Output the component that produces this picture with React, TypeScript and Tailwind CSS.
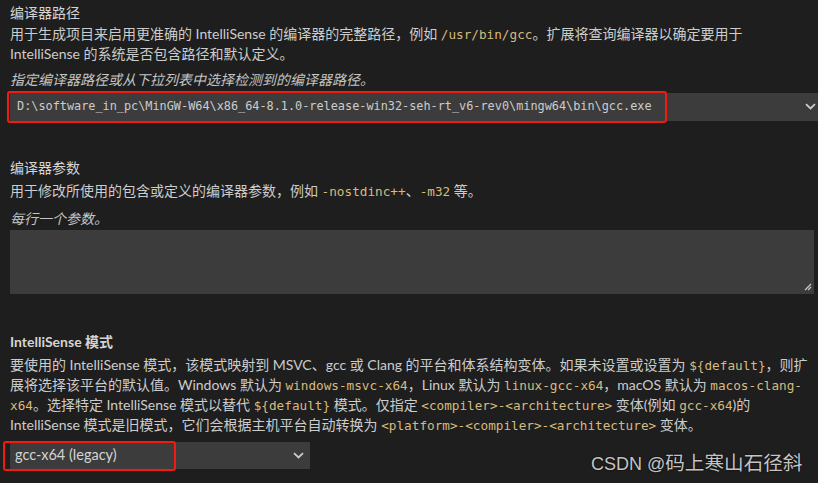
import React from "react";

function Code({ children }: { children: React.ReactNode }) {
  return (
    <span className="font-['DejaVu_Sans_Mono',monospace] text-[12.7px] text-[#d7ba7d]">{children}</span>
  );
}

function Chevron() {
  return (
    <svg width="11" height="7" viewBox="0 0 11 7" className="shrink-0">
      <path d="M1 1.2 L5.5 5.5 L10 1.2" fill="none" stroke="#cccccc" strokeWidth="1.8" />
    </svg>
  );
}

function RedMark({ className }: { className: string }) {
  return <div className={"pointer-events-none absolute rounded-[3px] border-2 border-[#f21b12] " + className} />;
}

export default function App() {
  return (
    <div className="relative h-[483px] w-[818px] overflow-hidden bg-[#1e1e1e] pl-[10px] pt-[3px] font-['Lato','Noto_Sans_CJK_SC',sans-serif] text-[14px] leading-[20px] text-[#cccccc]">
      {/* 编译器路径 */}
      <div className="h-[20px] text-[#d4d4d4]">编译器路径</div>
      <div className="mt-[1px] whitespace-nowrap">
        <div className="h-[20px]">
          用于生成项目来启用更准确的 IntelliSense 的编译器的完整路径，例如 <Code>/usr/bin/gcc</Code>。扩展将查询编译器以确定要用于
        </div>
        <div className="h-[20px]">IntelliSense 的系统是否包含路径和默认定义。</div>
      </div>
      <div className="mt-[6px] h-[20px] italic text-[#c4c4c4]">指定编译器路径或从下拉列表中选择检测到的编译器路径。</div>
      <div className="relative mt-[3px]">
        <div className="flex h-[28px] items-center justify-between bg-[#3c3c3c] pb-[2px] pl-[7px] pr-[2px]">
          <span className="whitespace-nowrap font-['DejaVu_Sans_Mono',monospace] text-[11.85px] text-[#cccccc]">
            D:\software_in_pc\MinGW-W64\x86_64-8.1.0-release-win32-seh-rt_v6-rev0\mingw64\bin\gcc.exe
          </span>
          <Chevron />
        </div>
        <RedMark className="-left-[3px] -top-[2px] h-[32px] w-[660px]" />
      </div>

      {/* 编译器参数 */}
      <div className="mt-[37px] h-[20px] text-[#d4d4d4]">编译器参数</div>
      <div className="mt-[3px] h-[20px] whitespace-nowrap">
        用于修改所使用的包含或定义的编译器参数，例如 <Code>-nostdinc++</Code>、<Code>-m32</Code> 等。
      </div>
      <div className="mt-[8px] h-[20px] italic text-[#c4c4c4]">每行一个参数。</div>
      <div className="relative mt-[1px] h-[64px] w-[804px] bg-[#3c3c3c]">
        <svg width="8" height="8" viewBox="0 0 8 8" className="absolute bottom-[3px] right-[2px]">
          <path d="M7 1 L1 7 M7 4 L4 7" stroke="#c8c8c8" strokeWidth="1.2" />
        </svg>
      </div>

      {/* IntelliSense 模式 */}
      <div className="mt-[38px] h-[20px] font-bold text-[#d4d4d4]">IntelliSense 模式</div>
      <div className="mt-[3px] whitespace-nowrap">
        <div className="h-[20px]">
          要使用的 IntelliSense 模式，该模式映射到 MSVC、gcc 或 Clang 的平台和体系结构变体。如果未设置或设置为 <Code>{"${default}"}</Code>，则扩
        </div>
        <div className="h-[20px]">
          展将选择该平台的默认值。Windows 默认为 <Code>windows-msvc-x64</Code>，Linux 默认为 <Code>linux-gcc-x64</Code>，macOS 默认为 <Code>macos-clang-</Code>
        </div>
        <div className="h-[20px]">
          <Code>x64</Code>。选择特定 IntelliSense 模式以替代 <Code>{"${default}"}</Code> 模式。仅指定 <Code>{"<compiler>-<architecture>"}</Code> 变体(例如 <Code>gcc-x64</Code>)的
        </div>
        <div className="h-[20px]">
          IntelliSense 模式是旧模式，它们会根据主机平台自动转换为 <Code>{"<platform>-<compiler>-<architecture>"}</Code> 变体。
        </div>
      </div>
      <div className="relative mt-[7px] w-[300px]">
        <div className="flex h-[27px] items-center justify-between bg-[#3c3c3c] pb-[1px] pl-[5px] pr-[6px]">
          <span className="text-[14.5px] text-[#d4d4d4]">gcc-x64 (legacy)</span>
          <Chevron />
        </div>
        <RedMark className="-left-[7px] -top-[1px] h-[30px] w-[173px]" />
      </div>

      {/* watermark */}
      <div className="absolute left-[591px] top-[450px] whitespace-nowrap font-['Liberation_Sans','Noto_Sans_CJK_SC',sans-serif] text-[18px] leading-[26px] text-[#c4c4c4] [text-shadow:0_0_2px_#000]">
        CSDN @<span className="text-[19.6px]">码上寒山石径斜</span>
      </div>
    </div>
  );
}
